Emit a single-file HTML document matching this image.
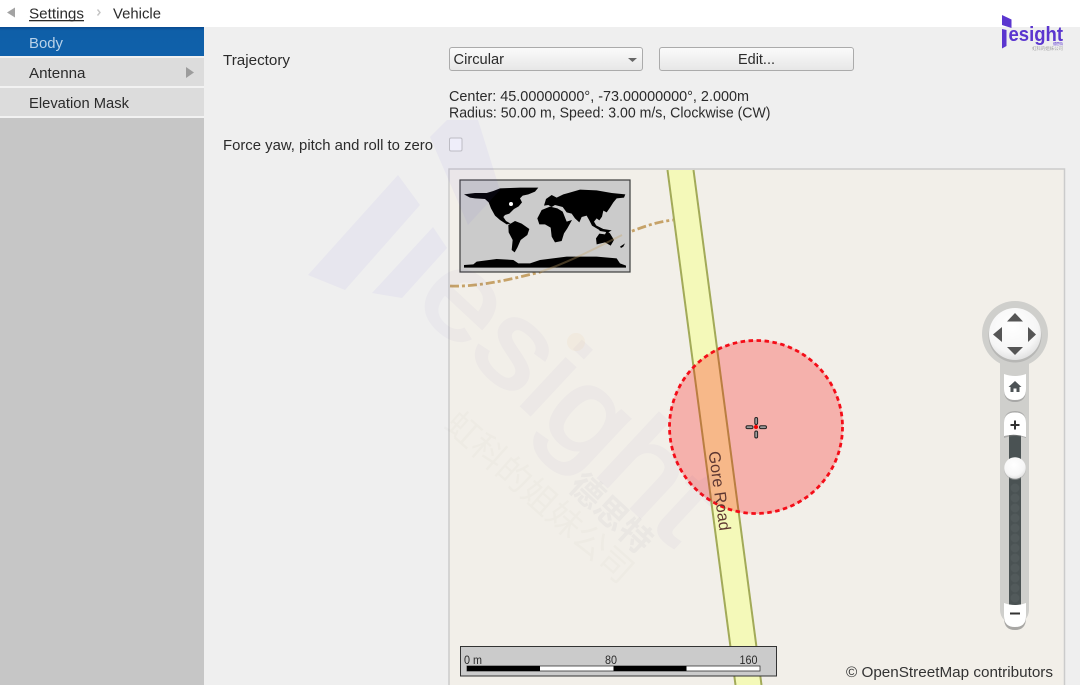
<!DOCTYPE html>
<html><head><meta charset="utf-8"><title>Vehicle Settings</title>
<style>
html,body{margin:0;padding:0;width:1080px;height:685px;overflow:hidden;background:#efefef}
svg{display:block;filter:blur(.3px)}
text{font-family:"Liberation Sans","Noto Sans CJK SC",sans-serif;font-size:15px;fill:#2b2b2b}
</style></head><body>
<svg width="1080" height="685" viewBox="0 0 1080 685" xmlns="http://www.w3.org/2000/svg">
<defs>
<linearGradient id="btn" x1="0" y1="0" x2="0" y2="1"><stop offset="0" stop-color="#fbfbfb"/><stop offset="1" stop-color="#e6e6e6"/></linearGradient>
<linearGradient id="blue" x1="0" y1="0" x2="0" y2="1"><stop offset="0" stop-color="#07488f"/><stop offset=".12" stop-color="#0f5fa8"/><stop offset="1" stop-color="#0f60aa"/></linearGradient>
<radialGradient id="knob" cx=".45" cy=".35" r=".7"><stop offset="0" stop-color="#fff"/><stop offset=".7" stop-color="#f6f6f6"/><stop offset="1" stop-color="#dcdcdc"/></radialGradient>
</defs>

<rect width="1080" height="685" fill="#efefef"/>
<rect width="1080" height="27" fill="#fff"/>

<!-- Header -->
<polygon points="15,7.500 15,17.500 7,12.500" fill="#a3a3a3"/>
<polyline points="97.500,9.500 100,12.500 97.500,15.500" fill="none" stroke="#c4c4c4" stroke-width="1.400"/>
<text x="29" y="18.500" textLength="55" lengthAdjust="spacingAndGlyphs">Settings</text>
<rect x="29" y="20" width="55" height="1.300" fill="#2b2b2b"/>
<text x="113" y="18.500" textLength="48" lengthAdjust="spacingAndGlyphs">Vehicle</text>

<!-- Sidebar -->
<rect x="0" y="27" width="204" height="658" fill="#c6c6c6"/>
<rect x="0" y="27" width="204" height="29" fill="url(#blue)"/>
<rect x="0" y="56" width="204" height="2" fill="#f0f0f0"/>
<rect x="0" y="58" width="204" height="28" fill="#dcdcdc"/>
<rect x="0" y="86" width="204" height="2" fill="#f2f2f2"/>
<rect x="0" y="88" width="204" height="28" fill="#dcdcdc"/>
<rect x="0" y="116" width="204" height="2" fill="#f2f2f2"/>
<text x="29" y="48" textLength="34" lengthAdjust="spacingAndGlyphs" style="fill:#b9d2e9">Body</text>
<text x="29" y="78" textLength="56.500" lengthAdjust="spacingAndGlyphs">Antenna</text>
<text x="29" y="108" textLength="100" lengthAdjust="spacingAndGlyphs">Elevation Mask</text>
<polygon points="186,67 186,78 194,72.500" fill="#9c9c9c"/>

<!-- Form -->
<text x="223" y="65" textLength="67" lengthAdjust="spacingAndGlyphs">Trajectory</text>
<rect x="449.500" y="47.500" width="193" height="23" rx="2.500" fill="url(#btn)" stroke="#ababab"/>
<text x="453.500" y="64" textLength="50.500" lengthAdjust="spacingAndGlyphs">Circular</text>
<polygon points="628,58 637,58 632.500,62" fill="#666"/>
<rect x="659.500" y="47.500" width="194" height="23" rx="2.500" fill="url(#btn)" stroke="#ababab"/>
<text x="738" y="64" textLength="37" lengthAdjust="spacingAndGlyphs">Edit...</text>
<text x="449" y="101" textLength="300" lengthAdjust="spacingAndGlyphs">Center: 45.00000000°, -73.00000000°, 2.000m</text>
<text x="449" y="117.500" textLength="321.500" lengthAdjust="spacingAndGlyphs">Radius: 50.00 m, Speed: 3.00 m/s, Clockwise (CW)</text>
<text x="223" y="150" textLength="210" lengthAdjust="spacingAndGlyphs">Force yaw, pitch and roll to zero</text>
<rect x="449.500" y="138" width="12.500" height="13" rx="1.500" fill="#f7f7fb" stroke="#c2c2c2"/>

<!-- Map -->
<rect x="449" y="169" width="615.500" height="517" fill="#f2efe9" stroke="#cbcbcb" stroke-width="1.500"/>
<polygon points="667,170 694,170 762,685 735,685" fill="#f4f9b9"/>
<line x1="667.500" y1="170" x2="735.500" y2="685" stroke="#a2aa58" stroke-width="2"/>
<line x1="693.500" y1="170" x2="761.500" y2="685" stroke="#a2aa58" stroke-width="2"/>
<path d="M450,286 C475,287 505,281 540,272 C570,262 600,246 622,235 C640,228 655,222 673,220" fill="none" stroke="#c6a268" stroke-width="2.800" stroke-dasharray="9 3 3 3"/>

<!-- Circle -->
<circle cx="756" cy="427" r="87" fill="#ff0000" fill-opacity=".26"/>
<circle cx="756" cy="427" r="86.500" fill="none" stroke="#f40d18" stroke-width="2.800" stroke-dasharray="4.500 3.500"/>
<text transform="translate(708.500,452) rotate(82)" textLength="80" lengthAdjust="spacingAndGlyphs" style="fill:#5f3832;font-size:16.500px">Gore Road</text>

<!-- Crosshair -->
<g fill="#999" stroke="#222" stroke-width="1">
<rect x="746" y="425.800" width="7" height="2.800" rx="1.400"/><rect x="759.500" y="425.800" width="7" height="2.800" rx="1.400"/>
<rect x="754.800" y="417.500" width="2.800" height="7" rx="1.400"/><rect x="754.800" y="431" width="2.800" height="7" rx="1.400"/>
</g>
<circle cx="756" cy="427" r="2" fill="#f00000"/>

<!-- Mini map -->
<rect x="460" y="180" width="170" height="92" fill="#cbcbcb" stroke="#3c3c3c" stroke-width="1.200"/>
<g transform="translate(440,165) scale(.33333)" fill="#000">
<polygon points="72,88 90,86 105,84 140,84 160,78 180,70 240,68 295,68 285,80 265,88 248,92 240,100 246,112 236,124 222,132 208,146 195,150 190,156 198,168 212,176 200,178 180,165 165,152 153,130 146,112 135,102 105,100 90,98"/>
<polygon points="205,180 225,168 245,176 268,192 262,210 242,225 232,248 224,262 215,255 218,225 206,202"/>
<polygon points="312,122 318,102 335,90 350,98 370,88 385,84 420,74 470,76 515,84 556,88 552,98 530,100 520,112 510,128 500,142 490,137 486,155 478,166 470,160 462,170 476,194 456,182 448,166 440,152 425,156 418,172 405,160 395,146 380,142 368,126 345,120 335,126 325,120"/>
<polygon points="292,160 305,135 330,125 352,130 368,140 380,170 396,165 382,190 372,205 365,228 345,232 335,215 332,188 315,178 298,178"/>
<polygon points="468,220 478,206 495,208 500,198 510,205 522,225 512,242 495,232 470,238"/>
<polygon points="462,178 490,192 515,196 505,202 480,198"/>
<polygon points="72,308 72,300 100,298 110,290 170,282 220,285 235,295 270,295 300,285 380,275 470,275 530,280 540,295 558,302 558,308"/>
<polygon points="540,245 555,235 550,245 543,249"/>
<circle cx="213" cy="117" r="6" fill="#fff"/>
</g>
<path d="M540,272 C570,262 600,246 622,235" fill="none" stroke="#c6a268" stroke-opacity=".35" stroke-width="2"/>

<!-- Scale -->
<rect x="460.500" y="646.500" width="316" height="29.500" fill="#cbcbcb" stroke="#333"/>
<text x="464" y="664" textLength="18" lengthAdjust="spacingAndGlyphs" style="font-size:11.500px">0 m</text>
<text x="605" y="664" textLength="12" lengthAdjust="spacingAndGlyphs" style="font-size:11.500px">80</text>
<text x="739.500" y="664" textLength="18" lengthAdjust="spacingAndGlyphs" style="font-size:11.500px">160</text>
<rect x="467" y="666" width="293" height="5" fill="#fff" stroke="#333" stroke-width=".8"/>
<rect x="467" y="666" width="73" height="5" fill="#000"/>
<rect x="613.500" y="666" width="73" height="5" fill="#000"/>

<text x="846" y="677" textLength="207" lengthAdjust="spacingAndGlyphs" style="fill:#333">© OpenStreetMap contributors</text>

<!-- Nav control -->
<rect x="1000" y="340" width="29" height="284" rx="14" fill="#cfcfcc"/>
<circle cx="1015" cy="334" r="33" fill="#cfcfcc"/>
<circle cx="1015" cy="336" r="26.500" fill="#999" opacity=".45"/>
<circle cx="1015" cy="334" r="26" fill="url(#knob)"/>
<g fill="#555">
<polygon points="1015,313 1007,321.500 1023,321.500"/>
<polygon points="1015,355 1007,347 1023,347"/>
<polygon points="993,334.500 1002,327 1002,342"/>
<polygon points="1036,334.500 1028,327 1028,342"/>
</g>
<path d="M1004,376 Q1015,379 1026,376 V390 Q1026,402 1015,402 Q1004,402 1004,390Z" fill="#888" opacity=".55"/>
<path d="M1004,374 Q1015,378 1026,374 V389 Q1026,400 1015,400 Q1004,400 1004,389Z" fill="#fff"/>
<path d="M1015,381 L1021.500,387 H1019.500 V392 H1016.500 V388.500 H1013.500 V392 H1010.500 V387 H1008.500Z" fill="#4d5356"/>
<rect x="1009" y="434" width="12" height="171" fill="#4a5253"/>
<g fill="#525a5b"><circle cx="1015" cy="488" r="4.500"/><circle cx="1015" cy="498" r="4.500"/><circle cx="1015" cy="508" r="4.500"/><circle cx="1015" cy="518" r="4.500"/><circle cx="1015" cy="528" r="4.500"/><circle cx="1015" cy="538" r="4.500"/><circle cx="1015" cy="548" r="4.500"/><circle cx="1015" cy="558" r="4.500"/><circle cx="1015" cy="568" r="4.500"/><circle cx="1015" cy="578" r="4.500"/><circle cx="1015" cy="588" r="4.500"/><circle cx="1015" cy="598" r="4.500"/></g>
<path d="M1004,438 V423 Q1004,411 1015,411 Q1026,411 1026,423 V438 Q1015,434 1004,438Z" fill="#888" opacity=".5"/>
<path d="M1004,436 V423 Q1004,412.500 1015,412.500 Q1026,412.500 1026,423 V437 Q1015,433 1004,436Z" fill="#fff"/>
<rect x="1010.500" y="424" width="9" height="2" fill="#333"/><rect x="1014" y="420.500" width="2" height="9" fill="#333"/>
<circle cx="1015" cy="469" r="11" fill="#aaa" opacity=".5"/>
<circle cx="1015" cy="468" r="10.800" fill="url(#knob)"/>
<path d="M1004,606 Q1015,610 1026,606 V618 Q1026,630 1015,630 Q1004,630 1004,618Z" fill="#777" opacity=".6"/>
<path d="M1004,603 Q1015,607 1026,603 V616 Q1026,627 1015,627 Q1004,627 1004,616Z" fill="#fff"/>
<rect x="1010" y="612.500" width="10" height="2" fill="#333"/>

<!-- Watermark -->
<g fill="#6a5af0" fill-opacity=".055">
<polygon points="308,275 398,175 420,205 345,290"/>
<polygon points="372,293 433,227 447,248 402,298"/>
<polygon points="430,137 447,120 478,120 500,190 468,225"/>
</g>
<g opacity=".032">
<text transform="translate(411,303) rotate(43)" textLength="360" lengthAdjust="spacingAndGlyphs" style="font-size:122px;fill:#4a3a9a;stroke:#4a3a9a;stroke-width:3">esight</text>
</g>
<circle cx="576" cy="342" r="9" fill="#f5a623" fill-opacity=".05"/>
<text transform="translate(442.600,427) rotate(41.600)" style="font-size:34px;fill:#6a4a3a;fill-opacity:.022">虹科的姐妹公司</text>
<text transform="translate(567,488) rotate(43)" style="font-size:33px;font-weight:bold;fill:#4a3a6a;fill-opacity:.045">德思特</text>

<!-- Logo -->
<polygon points="1002,15 1011.500,19.500 1011.500,28 1002,25" fill="#5b36cf"/>
<polygon points="1002,29 1006.500,30 1006.500,46 1002,48.500" fill="#5b36cf"/>
<text x="1008.500" y="41" textLength="54.500" lengthAdjust="spacingAndGlyphs" style="font-size:20px;font-weight:bold;fill:#5b36cf">esight</text>
<text x="1053" y="45" textLength="10" style="font-size:3.500px;fill:#5b36cf">德思特</text>
<text x="1032" y="50" textLength="31" style="font-size:4.500px;fill:#a5a5a5">虹科的姐妹公司</text>
</svg>
</body></html>
